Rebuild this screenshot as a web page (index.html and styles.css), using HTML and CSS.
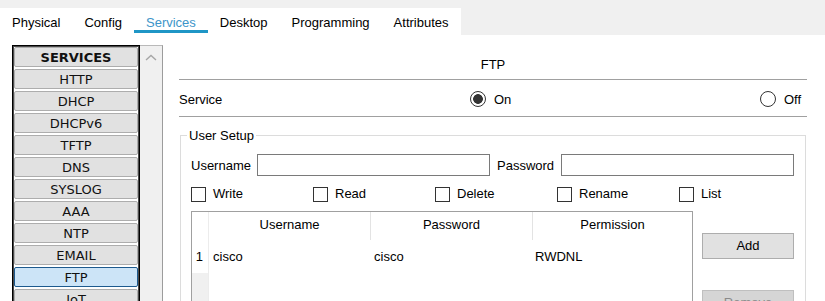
FILE: index.html
```html
<!DOCTYPE html>
<html>
<head>
<meta charset="utf-8">
<link rel="stylesheet" href="styles.css">
</head>
<body>
<div class="tabs">
  <div class="tab">Physical</div>
  <div class="tab">Config</div>
  <div class="tab active">Services</div>
  <div class="tab">Desktop</div>
  <div class="tab">Programming</div>
  <div class="tab">Attributes</div>
</div>
<div class="main">
  <div class="sidebar">
    <div class="list">
      <div class="item head">SERVICES</div>
      <div class="item">HTTP</div>
      <div class="item">DHCP</div>
      <div class="item">DHCPv6</div>
      <div class="item">TFTP</div>
      <div class="item">DNS</div>
      <div class="item">SYSLOG</div>
      <div class="item">AAA</div>
      <div class="item">NTP</div>
      <div class="item">EMAIL</div>
      <div class="item selected">FTP</div>
      <div class="item">IoT</div>
    </div>
    <div class="scroll">
      <svg class="chev" width="12" height="7" viewBox="0 0 12 7"><path d="M1 6 L6 1.5 L11 6" fill="none" stroke="#a6a6a6" stroke-width="1.4"/></svg>
    </div>
  </div>
  <div class="content">
    <div class="title">FTP</div>
    <div class="service-row">
      <div class="svc-label">Service</div>
      <div class="radio-group"><span class="radio checked"></span><span>On</span></div>
      <div class="radio-group off"><span class="radio"></span><span>Off</span></div>
    </div>
    <fieldset class="setup">
      <legend>User Setup</legend>
      <div class="cred-row">
        <span class="lbl user-lbl">Username</span>
        <span class="field user-field"></span>
        <span class="lbl pass-lbl">Password</span>
        <span class="field pass-field"></span>
      </div>
      <div class="perm-row">
        <div class="perm"><span class="box"></span><span>Write</span></div>
        <div class="perm"><span class="box"></span><span>Read</span></div>
        <div class="perm"><span class="box"></span><span>Delete</span></div>
        <div class="perm"><span class="box"></span><span>Rename</span></div>
        <div class="perm"><span class="box"></span><span>List</span></div>
      </div>
      <div class="grid-row">
        <div class="table">
          <div class="trow thead">
            <div class="rh"></div>
            <div class="c hc">Username</div>
            <div class="c hc">Password</div>
            <div class="c hc last">Permission</div>
          </div>
          <div class="trow tdata">
            <div class="rh num">1</div>
            <div class="c dc">cisco</div>
            <div class="c dc">cisco</div>
            <div class="c dc last">RWDNL</div>
          </div>
          <div class="trow tfill">
            <div class="rh gray"></div>
            <div class="c fill"></div>
          </div>
        </div>
        <div class="actions">
          <div class="btn">Add</div>
          <div class="btn disabled">Remove</div>
        </div>
      </div>
    </fieldset>
  </div>
</div>
</body>
</html>
```

FILE: styles.css
```css
html, body {
  margin: 0;
  padding: 0;
  height: 301px;
  overflow: hidden;
}
body {
  background: #f0f0f0;
  font-family: "Liberation Sans", Arial, sans-serif;
  font-size: 13px;
  color: #000;
}
.tabs {
  display: inline-flex;
  background: #fff;
  margin-top: 8px;
  padding-bottom: 2px;
  vertical-align: top;
}
.tab {
  padding: 7px 12px 0 12px;
  line-height: 15px;
  border-bottom: 3px solid transparent;
  color: #000;
}
.tab.active {
  color: #3d95c9;
  border-bottom-color: #1f96c6;
}
.main {
  display: flex;
  background: #fff;
  height: 300px;
  padding: 10px 0 0 12px;
  box-sizing: border-box;
}
.sidebar {
  display: flex;
  width: 151px;
  flex: none;
  height: 290px;
}
.list {
  width: 128px;
  box-sizing: border-box;
  border: 1px solid #000;
  box-shadow: inset 0 0 0 1px #4a4a4a;
  padding: 1px;
  height: 290px;
  background: #fff;
}
.item {
  height: 20px;
  box-sizing: border-box;
  border: 1px solid #adadad;
  border-radius: 2px;
  background: #e1e1e1;
  margin-bottom: 2px;
  font-family: "DejaVu Sans", sans-serif;
  font-size: 13px;
  line-height: 20px;
  text-align: center;
  color: #111;
  overflow: visible;
}
.item.head {
  font-weight: bold;
}
.item.selected {
  background: #cce4f7;
  border-color: #1d5a8e;
}
.scroll {
  width: 23px;
  box-sizing: border-box;
  background: #f0f0f0;
  border-top: 1px solid #b9b9b9;
  border-right: 1px solid #9c9c9c;
  height: 290px;
  display: flex;
  justify-content: center;
  align-items: flex-start;
  padding-top: 8px;
}
.chev {
  display: block;
}
.content {
  margin-left: 16px;
  width: 628px;
  flex: none;
}
.title {
  text-align: center;
  padding-top: 12px;
  padding-bottom: 7px;
  line-height: 15px;
  border-bottom: 1px solid #a0a0a0;
}
.service-row {
  display: flex;
  align-items: center;
  height: 32px;
  padding-top: 3px;
  padding-bottom: 1px;
  border-bottom: 1px solid #a0a0a0;
}
.svc-label {
  width: 291px;
  flex: none;
}
.radio-group {
  display: flex;
  align-items: center;
}
.radio-group.off {
  margin-left: auto;
  margin-right: 6px;
}
.radio {
  width: 16px;
  height: 16px;
  box-sizing: border-box;
  border: 1px solid #333;
  border-radius: 50%;
  margin-right: 8px;
  background: #fff;
}
.radio.checked {
  background: radial-gradient(circle, #333 0, #333 4.5px, #fff 5.2px);
}
.setup {
  margin: 11px 1px 0 1px;
  padding: 11px 11px 0 10px;
  border: 1px solid #dcdcdc;
  min-width: 0;
  height: 200px;
}
.setup legend {
  padding: 0 2px;
  margin-left: -4px;
  line-height: 15px;
  color: #000;
}
.cred-row {
  display: flex;
  align-items: center;
  height: 22px;
}
.lbl {
  flex: none;
}
.user-lbl {
  width: 66px;
}
.pass-lbl {
  width: 64px;
}
.field {
  height: 22px;
  box-sizing: border-box;
  border: 1px solid #7a7a7a;
  background: #fff;
}
.user-field {
  width: 233px;
  margin-right: 7px;
}
.pass-field {
  flex: 1;
}
.perm-row {
  display: flex;
  margin-top: 11px;
  height: 15px;
  align-items: center;
}
.perm {
  width: 122px;
  flex: none;
  display: flex;
  align-items: center;
}
.perm span:last-child {
  position: relative;
  top: -1px;
}
.box {
  width: 15px;
  height: 15px;
  flex: none;
  box-sizing: border-box;
  border: 1px solid #333;
  margin-right: 7px;
  background: #fff;
}
.grid-row {
  display: flex;
  margin-top: 9px;
}
.table {
  width: 502px;
  height: 100px;
  box-sizing: border-box;
  border: 1px solid #a0a0a0;
  display: flex;
  flex-direction: column;
  flex: none;
}
.trow {
  display: flex;
}
.rh {
  width: 17px;
  flex: none;
  box-sizing: border-box;
  border-right: 1px solid #ececec;
}
.rh.gray {
  background: #f0f0f0;
}
.c {
  width: 162px;
  flex: none;
  box-sizing: border-box;
}
.c.last {
  width: auto;
  flex: 1;
}
.hc {
  text-align: center;
  height: 28px;
  padding-top: 5px;
  line-height: 15px;
  border-right: 1px solid #e3e3e3;
}
.hc.last {
  border-right: none;
}
.tdata {
  height: 33px;
}
.tdata .rh, .tdata .c {
  padding-top: 9px;
  line-height: 15px;
}
.num {
  text-align: right;
  padding-right: 5px;
}
.dc {
  padding-left: 3px;
}
.tdata .dc:nth-child(2) {
  padding-left: 4px;
}
.tdata .dc.last {
  padding-left: 2px;
}
.tfill {
  flex: 1;
}
.c.fill {
  flex: 1;
  width: auto;
}
.actions {
  margin-left: 9px;
  width: 92px;
  flex: none;
  padding-top: 22px;
}
.btn {
  height: 26px;
  box-sizing: border-box;
  border: 1px solid #adadad;
  background: #e1e1e1;
  text-align: center;
  line-height: 24px;
  color: #000;
}
.btn.disabled {
  margin-top: 31px;
  background: #d5d5d5;
  border-color: #bfbfbf;
  color: #8a8a8a;
}
```
